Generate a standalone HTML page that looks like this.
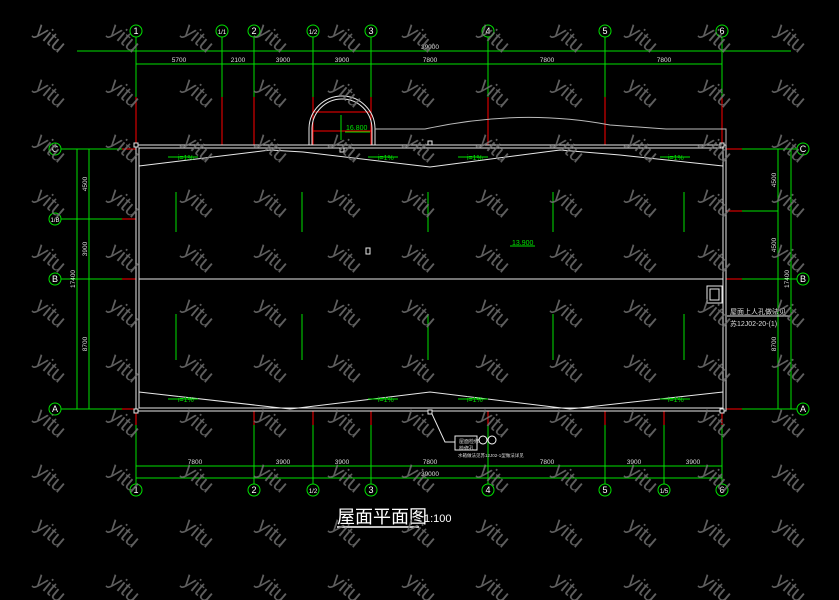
<!DOCTYPE html>
<html><head><meta charset="utf-8"><style>
html,body{margin:0;padding:0;background:#000;}
svg{display:block}
text{font-family:"Liberation Sans",sans-serif}
</style></head><body>
<svg width="839" height="600" viewBox="0 0 839 600" xmlns="http://www.w3.org/2000/svg">
<rect width="839" height="600" fill="#000"/>
<!-- watermark -->
<g fill="#6e6e6e" font-size="21" font-family="Liberation Sans,sans-serif" font-style="italic">
<script></script>
</g>
<g id="wm" fill="#707070" font-size="21">
</g>
<!-- grid verticals top -->
<g stroke="#00e000" stroke-width="1" fill="none">
<line x1="77" y1="51" x2="791" y2="51"/>
<line x1="136" y1="51" x2="722" y2="51"/>
<line x1="136" y1="64" x2="722" y2="64"/>
<line x1="136" y1="466" x2="722" y2="466"/>
<line x1="136" y1="478" x2="722" y2="478"/>
<line x1="136" y1="37" x2="136" y2="97"/><line x1="222" y1="37" x2="222" y2="97"/><line x1="254" y1="37" x2="254" y2="97"/>
<line x1="313" y1="37" x2="313" y2="97"/><line x1="371" y1="37" x2="371" y2="97"/><line x1="488" y1="37" x2="488" y2="97"/>
<line x1="605" y1="37" x2="605" y2="97"/><line x1="722" y1="37" x2="722" y2="97"/>
<line x1="136" y1="425" x2="136" y2="484"/><line x1="254" y1="425" x2="254" y2="484"/><line x1="313" y1="425" x2="313" y2="484"/>
<line x1="371" y1="425" x2="371" y2="484"/><line x1="488" y1="425" x2="488" y2="484"/><line x1="605" y1="425" x2="605" y2="484"/>
<line x1="664" y1="425" x2="664" y2="484"/><line x1="722" y1="425" x2="722" y2="484"/>
<!-- left -->
<line x1="61" y1="149" x2="122" y2="149"/><line x1="61" y1="219" x2="122" y2="219"/><line x1="61" y1="279" x2="122" y2="279"/><line x1="61" y1="409" x2="122" y2="409"/>
<line x1="77" y1="149" x2="77" y2="409"/><line x1="89" y1="149" x2="89" y2="409"/>
<!-- right -->
<line x1="742" y1="149" x2="797" y2="149"/><line x1="742" y1="279" x2="797" y2="279"/><line x1="742" y1="409" x2="797" y2="409"/>
<line x1="778" y1="149" x2="778" y2="409"/><line x1="791" y1="149" x2="791" y2="409"/>
<line x1="742" y1="211" x2="778" y2="211"/>
</g>
<!-- red segments -->
<g stroke="#ff0000" stroke-width="1">
<line x1="136" y1="97" x2="136" y2="145"/><line x1="222" y1="97" x2="222" y2="145"/><line x1="254" y1="97" x2="254" y2="145"/>
<line x1="313" y1="97" x2="313" y2="145"/><line x1="371" y1="97" x2="371" y2="145"/><line x1="488" y1="97" x2="488" y2="145"/>
<line x1="605" y1="97" x2="605" y2="145"/><line x1="722" y1="97" x2="722" y2="145"/>
<line x1="136" y1="411" x2="136" y2="425"/><line x1="254" y1="411" x2="254" y2="425"/><line x1="313" y1="411" x2="313" y2="425"/>
<line x1="371" y1="411" x2="371" y2="425"/><line x1="488" y1="411" x2="488" y2="425"/><line x1="605" y1="411" x2="605" y2="425"/>
<line x1="664" y1="411" x2="664" y2="425"/><line x1="722" y1="411" x2="722" y2="425"/>
<line x1="122" y1="149" x2="136" y2="149"/><line x1="122" y1="219" x2="136" y2="219"/><line x1="122" y1="279" x2="136" y2="279"/><line x1="122" y1="409" x2="136" y2="409"/>
<line x1="726" y1="149" x2="742" y2="149"/><line x1="726" y1="211" x2="742" y2="211"/><line x1="726" y1="279" x2="742" y2="279"/><line x1="726" y1="409" x2="742" y2="409"/>
<line x1="313" y1="112" x2="371" y2="112"/><line x1="313" y1="131" x2="371" y2="131"/>
</g>
<!-- building -->
<g stroke="#e8e8e8" stroke-width="1" fill="none">
<rect x="136" y="145" width="590" height="266"/>
<rect x="139" y="148" width="584" height="260"/>
<line x1="139" y1="279" x2="723" y2="279"/>
<polyline points="139,166 270,150 303,152 430,167 560,150 620,155 723,166"/>
<polyline points="139,392 290,409 430,392 570,409 723,392"/>
<path d="M309,145 V129 A33,33 0 0 1 375,129 V145"/>
<path d="M312,145 V129 A30,30 0 0 1 372,129 V145"/>
<path d="M375,129 H425 Q520,108 610,125 L666,129 H726 V145" stroke="#bbb"/>
<rect x="134" y="143" width="4" height="4" fill="#000"/><rect x="428" y="141" width="4" height="4" fill="#000"/>
<rect x="720" y="143" width="4" height="4" fill="#000"/><rect x="340" y="148" width="4" height="4" fill="#000"/>
<rect x="134" y="409" width="4" height="4" fill="#000"/><rect x="428" y="410" width="4" height="4" fill="#000"/>
<rect x="720" y="409" width="4" height="4" fill="#000"/>
<rect x="707" y="286" width="15" height="17"/><rect x="710" y="289" width="9" height="11"/>
<rect x="366" y="248" width="4" height="6"/>
<polyline points="432,414 445,442 455,442"/>
<rect x="455" y="436" width="22" height="14"/>
<line x1="727" y1="316" x2="790" y2="316"/>
</g>
<!-- slope arrows -->
<g stroke="#00e000" stroke-width="1" fill="#00e000" font-size="6">
<line x1="168" y1="157" x2="198" y2="157"/><line x1="368" y1="157" x2="398" y2="157"/><line x1="458" y1="157" x2="488" y2="157"/><line x1="660" y1="157" x2="690" y2="157"/>
<line x1="168" y1="399" x2="198" y2="399"/><line x1="368" y1="399" x2="398" y2="399"/><line x1="458" y1="399" x2="488" y2="399"/><line x1="660" y1="399" x2="690" y2="399"/>
<line x1="176" y1="192" x2="176" y2="232"/><line x1="302" y1="192" x2="302" y2="232"/><line x1="428" y1="192" x2="428" y2="232"/><line x1="553" y1="192" x2="553" y2="232"/><line x1="684" y1="192" x2="684" y2="232"/>
<line x1="176" y1="314" x2="176" y2="360"/><line x1="302" y1="314" x2="302" y2="360"/><line x1="428" y1="314" x2="428" y2="360"/><line x1="553" y1="314" x2="553" y2="360"/><line x1="684" y1="314" x2="684" y2="360"/>
<line x1="341" y1="115" x2="341" y2="140"/><line x1="345" y1="132" x2="370" y2="132"/>
<line x1="510" y1="246" x2="535" y2="246"/>
</g>
<g fill="#00e000" font-size="7">
<text x="346" y="130">16.800</text><text x="512" y="245">13.900</text>
<text x="178" y="160">i=1%</text><text x="378" y="160">i=1%</text><text x="467" y="160">i=1%</text><text x="668" y="160">i=1%</text>
<text x="178" y="402">i=1%</text><text x="378" y="402">i=1%</text><text x="467" y="402">i=1%</text><text x="668" y="402">i=1%</text>
</g>
<!-- dims text -->
<g fill="#ddd" font-size="6.5" text-anchor="middle">
<text x="179" y="62">5700</text><text x="238" y="62">2100</text><text x="283" y="62">3900</text><text x="342" y="62">3900</text>
<text x="430" y="62">7800</text><text x="547" y="62">7800</text><text x="664" y="62">7800</text><text x="430" y="49">39000</text>
<text x="195" y="464">7800</text><text x="283" y="464">3900</text><text x="342" y="464">3900</text><text x="430" y="464">7800</text>
<text x="547" y="464">7800</text><text x="634" y="464">3900</text><text x="693" y="464">3900</text><text x="430" y="476">39000</text>
<text transform="translate(87,184) rotate(-90)">4500</text><text transform="translate(87,249) rotate(-90)">3900</text>
<text transform="translate(75,279) rotate(-90)">17400</text><text transform="translate(87,344) rotate(-90)">8700</text>
<text transform="translate(776,180) rotate(-90)">4500</text><text transform="translate(776,245) rotate(-90)">4500</text>
<text transform="translate(789,279) rotate(-90)">17400</text><text transform="translate(776,344) rotate(-90)">8700</text>
</g>
<g fill="#ddd" font-size="7" font-family="Liberation Sans,Noto Sans CJK SC,sans-serif">
<text x="730" y="314">屋面上人孔做法见</text><text x="730" y="326">苏12J02-20-(1)</text>
<text x="459" y="443" font-size="5">屋面检修</text><text x="459" y="450" font-size="5">检修孔</text>
<text x="458" y="457" font-size="4.5">水箱做法见苏12J02-1型做法详见</text>
</g>
<!-- bubbles -->
<g stroke="#00e000" stroke-width="1" fill="#000">
<circle cx="136" cy="31" r="6"/><circle cx="222" cy="31" r="6"/><circle cx="254" cy="31" r="6"/><circle cx="313" cy="31" r="6"/>
<circle cx="371" cy="31" r="6"/><circle cx="488" cy="31" r="6"/><circle cx="605" cy="31" r="6"/><circle cx="722" cy="31" r="6"/>
<circle cx="136" cy="490" r="6"/><circle cx="254" cy="490" r="6"/><circle cx="313" cy="490" r="6"/><circle cx="371" cy="490" r="6"/>
<circle cx="488" cy="490" r="6"/><circle cx="605" cy="490" r="6"/><circle cx="664" cy="490" r="6"/><circle cx="722" cy="490" r="6"/>
<circle cx="55" cy="149" r="6"/><circle cx="55" cy="219" r="6"/><circle cx="55" cy="279" r="6"/><circle cx="55" cy="409" r="6"/>
<circle cx="803" cy="149" r="6"/><circle cx="803" cy="279" r="6"/><circle cx="803" cy="409" r="6"/>
<circle cx="483" cy="440" r="4" fill="none" stroke="#fff"/><circle cx="492" cy="440" r="4" fill="none" stroke="#fff"/>
</g>
<g fill="#fff" font-size="9" text-anchor="middle">
<text x="136" y="34">1</text><text x="222" y="34" font-size="6">1/1</text><text x="254" y="34">2</text><text x="313" y="34" font-size="6">1/2</text>
<text x="371" y="34">3</text><text x="488" y="34">4</text><text x="605" y="34">5</text><text x="722" y="34">6</text>
<text x="136" y="493">1</text><text x="254" y="493">2</text><text x="313" y="493" font-size="6">1/2</text><text x="371" y="493">3</text>
<text x="488" y="493">4</text><text x="605" y="493">5</text><text x="664" y="493" font-size="6">1/5</text><text x="722" y="493">6</text>
<text x="55" y="152">C</text><text x="55" y="222" font-size="6">1/B</text><text x="55" y="282">B</text><text x="55" y="412">A</text>
<text x="803" y="152">C</text><text x="803" y="282">B</text><text x="803" y="412">A</text>
</g>
<text x="337" y="523" fill="#fff" font-size="18" font-family="Liberation Serif,Noto Serif CJK SC,serif">屋面平面图</text>
<line x1="337" y1="527" x2="419" y2="527" stroke="#fff" stroke-width="1.5"/>
<text x="424" y="522" fill="#fff" font-size="11" font-family="Liberation Serif,serif">1:100</text>
<!-- watermark grid -->
<g fill="#7a7a7a" fill-opacity="0.85" font-size="21" font-family="Liberation Sans,sans-serif">
<g transform="translate(40,25)"><text transform="rotate(40)" x="0" y="10">yitu</text></g>
</g>
<g fill="#7a7a7a" fill-opacity="0.8" font-size="21">
<!-- rows -->
<g id="row"></g>
</g>
<g fill="#777" fill-opacity="0.8" font-size="21">
<text transform="translate(114,25) rotate(40)" y="10">yitu</text><text transform="translate(188,25) rotate(40)" y="10">yitu</text><text transform="translate(262,25) rotate(40)" y="10">yitu</text><text transform="translate(336,25) rotate(40)" y="10">yitu</text><text transform="translate(410,25) rotate(40)" y="10">yitu</text><text transform="translate(484,25) rotate(40)" y="10">yitu</text><text transform="translate(558,25) rotate(40)" y="10">yitu</text><text transform="translate(632,25) rotate(40)" y="10">yitu</text><text transform="translate(706,25) rotate(40)" y="10">yitu</text><text transform="translate(780,25) rotate(40)" y="10">yitu</text>
</g>
<g fill="#777" fill-opacity="0.8" font-size="21">
<g transform="translate(0,55)"><text transform="translate(40,25) rotate(40)" y="10">yitu</text><text transform="translate(114,25) rotate(40)" y="10">yitu</text><text transform="translate(188,25) rotate(40)" y="10">yitu</text><text transform="translate(262,25) rotate(40)" y="10">yitu</text><text transform="translate(336,25) rotate(40)" y="10">yitu</text><text transform="translate(410,25) rotate(40)" y="10">yitu</text><text transform="translate(484,25) rotate(40)" y="10">yitu</text><text transform="translate(558,25) rotate(40)" y="10">yitu</text><text transform="translate(632,25) rotate(40)" y="10">yitu</text><text transform="translate(706,25) rotate(40)" y="10">yitu</text><text transform="translate(780,25) rotate(40)" y="10">yitu</text></g>
<g transform="translate(0,110)"><text transform="translate(40,25) rotate(40)" y="10">yitu</text><text transform="translate(114,25) rotate(40)" y="10">yitu</text><text transform="translate(188,25) rotate(40)" y="10">yitu</text><text transform="translate(262,25) rotate(40)" y="10">yitu</text><text transform="translate(336,25) rotate(40)" y="10">yitu</text><text transform="translate(410,25) rotate(40)" y="10">yitu</text><text transform="translate(484,25) rotate(40)" y="10">yitu</text><text transform="translate(558,25) rotate(40)" y="10">yitu</text><text transform="translate(632,25) rotate(40)" y="10">yitu</text><text transform="translate(706,25) rotate(40)" y="10">yitu</text><text transform="translate(780,25) rotate(40)" y="10">yitu</text></g>
<g transform="translate(0,165)"><text transform="translate(40,25) rotate(40)" y="10">yitu</text><text transform="translate(114,25) rotate(40)" y="10">yitu</text><text transform="translate(188,25) rotate(40)" y="10">yitu</text><text transform="translate(262,25) rotate(40)" y="10">yitu</text><text transform="translate(336,25) rotate(40)" y="10">yitu</text><text transform="translate(410,25) rotate(40)" y="10">yitu</text><text transform="translate(484,25) rotate(40)" y="10">yitu</text><text transform="translate(558,25) rotate(40)" y="10">yitu</text><text transform="translate(632,25) rotate(40)" y="10">yitu</text><text transform="translate(706,25) rotate(40)" y="10">yitu</text><text transform="translate(780,25) rotate(40)" y="10">yitu</text></g>
<g transform="translate(0,220)"><text transform="translate(40,25) rotate(40)" y="10">yitu</text><text transform="translate(114,25) rotate(40)" y="10">yitu</text><text transform="translate(188,25) rotate(40)" y="10">yitu</text><text transform="translate(262,25) rotate(40)" y="10">yitu</text><text transform="translate(336,25) rotate(40)" y="10">yitu</text><text transform="translate(410,25) rotate(40)" y="10">yitu</text><text transform="translate(484,25) rotate(40)" y="10">yitu</text><text transform="translate(558,25) rotate(40)" y="10">yitu</text><text transform="translate(632,25) rotate(40)" y="10">yitu</text><text transform="translate(706,25) rotate(40)" y="10">yitu</text><text transform="translate(780,25) rotate(40)" y="10">yitu</text></g>
<g transform="translate(0,275)"><text transform="translate(40,25) rotate(40)" y="10">yitu</text><text transform="translate(114,25) rotate(40)" y="10">yitu</text><text transform="translate(188,25) rotate(40)" y="10">yitu</text><text transform="translate(262,25) rotate(40)" y="10">yitu</text><text transform="translate(336,25) rotate(40)" y="10">yitu</text><text transform="translate(410,25) rotate(40)" y="10">yitu</text><text transform="translate(484,25) rotate(40)" y="10">yitu</text><text transform="translate(558,25) rotate(40)" y="10">yitu</text><text transform="translate(632,25) rotate(40)" y="10">yitu</text><text transform="translate(706,25) rotate(40)" y="10">yitu</text><text transform="translate(780,25) rotate(40)" y="10">yitu</text></g>
<g transform="translate(0,330)"><text transform="translate(40,25) rotate(40)" y="10">yitu</text><text transform="translate(114,25) rotate(40)" y="10">yitu</text><text transform="translate(188,25) rotate(40)" y="10">yitu</text><text transform="translate(262,25) rotate(40)" y="10">yitu</text><text transform="translate(336,25) rotate(40)" y="10">yitu</text><text transform="translate(410,25) rotate(40)" y="10">yitu</text><text transform="translate(484,25) rotate(40)" y="10">yitu</text><text transform="translate(558,25) rotate(40)" y="10">yitu</text><text transform="translate(632,25) rotate(40)" y="10">yitu</text><text transform="translate(706,25) rotate(40)" y="10">yitu</text><text transform="translate(780,25) rotate(40)" y="10">yitu</text></g>
<g transform="translate(0,385)"><text transform="translate(40,25) rotate(40)" y="10">yitu</text><text transform="translate(114,25) rotate(40)" y="10">yitu</text><text transform="translate(188,25) rotate(40)" y="10">yitu</text><text transform="translate(262,25) rotate(40)" y="10">yitu</text><text transform="translate(336,25) rotate(40)" y="10">yitu</text><text transform="translate(410,25) rotate(40)" y="10">yitu</text><text transform="translate(484,25) rotate(40)" y="10">yitu</text><text transform="translate(558,25) rotate(40)" y="10">yitu</text><text transform="translate(632,25) rotate(40)" y="10">yitu</text><text transform="translate(706,25) rotate(40)" y="10">yitu</text><text transform="translate(780,25) rotate(40)" y="10">yitu</text></g>
<g transform="translate(0,440)"><text transform="translate(40,25) rotate(40)" y="10">yitu</text><text transform="translate(114,25) rotate(40)" y="10">yitu</text><text transform="translate(188,25) rotate(40)" y="10">yitu</text><text transform="translate(262,25) rotate(40)" y="10">yitu</text><text transform="translate(336,25) rotate(40)" y="10">yitu</text><text transform="translate(410,25) rotate(40)" y="10">yitu</text><text transform="translate(484,25) rotate(40)" y="10">yitu</text><text transform="translate(558,25) rotate(40)" y="10">yitu</text><text transform="translate(632,25) rotate(40)" y="10">yitu</text><text transform="translate(706,25) rotate(40)" y="10">yitu</text><text transform="translate(780,25) rotate(40)" y="10">yitu</text></g>
<g transform="translate(0,495)"><text transform="translate(40,25) rotate(40)" y="10">yitu</text><text transform="translate(114,25) rotate(40)" y="10">yitu</text><text transform="translate(188,25) rotate(40)" y="10">yitu</text><text transform="translate(262,25) rotate(40)" y="10">yitu</text><text transform="translate(336,25) rotate(40)" y="10">yitu</text><text transform="translate(410,25) rotate(40)" y="10">yitu</text><text transform="translate(484,25) rotate(40)" y="10">yitu</text><text transform="translate(558,25) rotate(40)" y="10">yitu</text><text transform="translate(632,25) rotate(40)" y="10">yitu</text><text transform="translate(706,25) rotate(40)" y="10">yitu</text><text transform="translate(780,25) rotate(40)" y="10">yitu</text></g>
<g transform="translate(0,550)"><text transform="translate(40,25) rotate(40)" y="10">yitu</text><text transform="translate(114,25) rotate(40)" y="10">yitu</text><text transform="translate(188,25) rotate(40)" y="10">yitu</text><text transform="translate(262,25) rotate(40)" y="10">yitu</text><text transform="translate(336,25) rotate(40)" y="10">yitu</text><text transform="translate(410,25) rotate(40)" y="10">yitu</text><text transform="translate(484,25) rotate(40)" y="10">yitu</text><text transform="translate(558,25) rotate(40)" y="10">yitu</text><text transform="translate(632,25) rotate(40)" y="10">yitu</text><text transform="translate(706,25) rotate(40)" y="10">yitu</text><text transform="translate(780,25) rotate(40)" y="10">yitu</text></g>
</g>
</svg>
</body></html>
